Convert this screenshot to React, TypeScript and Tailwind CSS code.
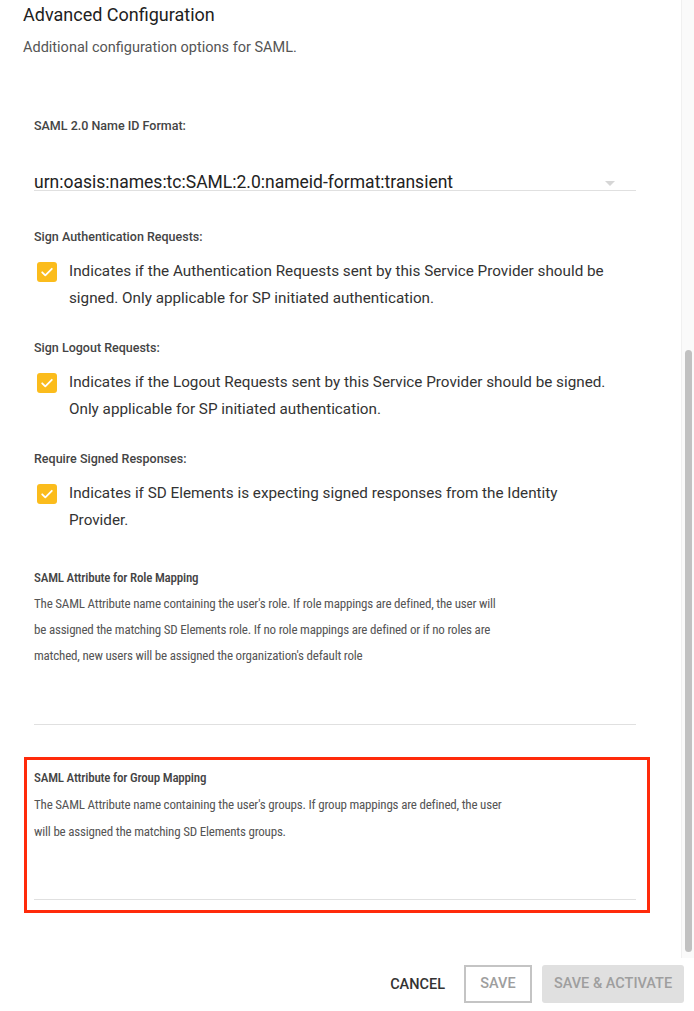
import React from "react";

const cond = "font-['Roboto_Condensed','Liberation_Sans_Narrow','DejaVu_Sans_Condensed',Roboto,sans-serif]";

function CheckRow({ children }: { children: React.ReactNode }) {
  return (
    <div className="mt-[12px] flex items-start gap-[12px] pl-[3px]">
      <span className="mt-[4px] flex h-[20px] w-[20px] shrink-0 items-center justify-center rounded-[3px] bg-[#fbbc1c]">
        <svg width="14" height="14" viewBox="0 0 14 14" fill="none">
          <path d="M2.2 7.3l3.1 3.1 6.5-6.6" stroke="#fff" strokeWidth="1.8" strokeLinecap="round" strokeLinejoin="round" />
        </svg>
      </span>
      <p className="w-[545px] text-[15.25px] leading-[27px] text-[#333]">{children}</p>
    </div>
  );
}

function Label({ children, top }: { children: React.ReactNode; top: string }) {
  return <div className={`${top} text-[12.5px] font-medium leading-[18px] text-[#444]`}>{children}</div>;
}

export default function App() {
  return (
    <div className="flex h-[1011px] w-[694px] flex-col overflow-hidden bg-white font-['Roboto',sans-serif]">
      <div className="flex h-[958px] shrink-0">
        <div className="flex-1">
          <div className="pl-[23px] pt-[3px]">
            <h2 className="text-[18px] leading-[24px] text-[#212121]">Advanced Configuration</h2>
            <p className="mt-[11px] text-[14.5px] leading-[20px] text-[#555]">Additional configuration options for SAML.</p>
          </div>

          <div className="ml-[34px] w-[602px]">
            <Label top="mt-[59px]">SAML 2.0 Name ID Format:</Label>
            <div className="mt-[39px] flex items-end justify-between border-b border-[#e0e0e0]">
              <span className="text-[17.5px] leading-[16px] text-[#222]">urn:oasis:names:tc:SAML:2.0:nameid-format:transient</span>
              <svg width="12" height="10" viewBox="0 0 12 10" className="mb-[1px] mr-[20px]">
                <path d="M1 2h10L6 7z" fill="#d6d6d6" />
              </svg>
            </div>

            <Label top="mt-[37px]">Sign Authentication Requests:</Label>
            <CheckRow>
              Indicates if the Authentication Requests sent by this Service Provider should be signed. Only applicable for SP initiated authentication.
            </CheckRow>

            <Label top="mt-[27px]">Sign Logout Requests:</Label>
            <CheckRow>
              Indicates if the Logout Requests sent by this Service Provider should be signed. Only applicable for SP initiated authentication.
            </CheckRow>

            <Label top="mt-[27px]">Require Signed Responses:</Label>
            <CheckRow>Indicates if SD Elements is expecting signed responses from the Identity Provider.</CheckRow>

            <div className={`mt-[31px] ${cond}`}>
              <div className="text-[13px] font-medium leading-[26px] tracking-[-0.2px] text-[#444]">SAML Attribute for Role Mapping</div>
              <p className="w-[474px] text-[13px] leading-[26px] tracking-[-0.2px] text-[#555]">
                The SAML Attribute name containing the user's role. If role mappings are defined, the user will be assigned the matching SD Elements role. If no role mappings are defined or if no roles are matched, new users will be assigned the organization's default role
              </p>
              <div className="h-[56px] border-b border-[#e0e0e0]" />
            </div>

            <div className={`-ml-[10px] -mr-[14px] mt-[32px] border-[3px] border-[#ff2a0a] pb-[10px] pl-[7px] pr-[11px] pt-[5px] ${cond}`}>
              <div className="text-[13px] font-medium leading-[26px] tracking-[-0.2px] text-[#444]">SAML Attribute for Group Mapping</div>
              <p className="w-[474px] text-[13px] leading-[27px] tracking-[-0.2px] text-[#555]">
                The SAML Attribute name containing the user's groups. If group mappings are defined, the user will be assigned the matching SD Elements groups.
              </p>
              <div className="h-[55px] border-b border-[#e0e0e0]" />
            </div>
          </div>
        </div>

        <div className="w-[13px] shrink-0 border-l border-[#f0f0f0] bg-[#fafafa] pt-[350px]">
          <div className="mx-auto h-[602px] w-[7px] rounded-full bg-[#c1c1c1]" />
        </div>
      </div>

      <div className="mt-[7px] flex items-center justify-end gap-[10px] pr-[10px]">
        <button className="px-[9px] text-[14.5px] font-medium leading-[37px] text-[#333]">CANCEL</button>
        <button className="h-[38px] w-[68px] border-2 border-[#c4c4c4] text-[14.5px] font-medium text-[#9e9e9e]">SAVE</button>
        <button className="h-[38px] w-[142px] rounded-[3px] bg-[#e0e0e0] text-[14.5px] font-medium text-[#9e9e9e]">SAVE &amp; ACTIVATE</button>
      </div>
    </div>
  );
}
